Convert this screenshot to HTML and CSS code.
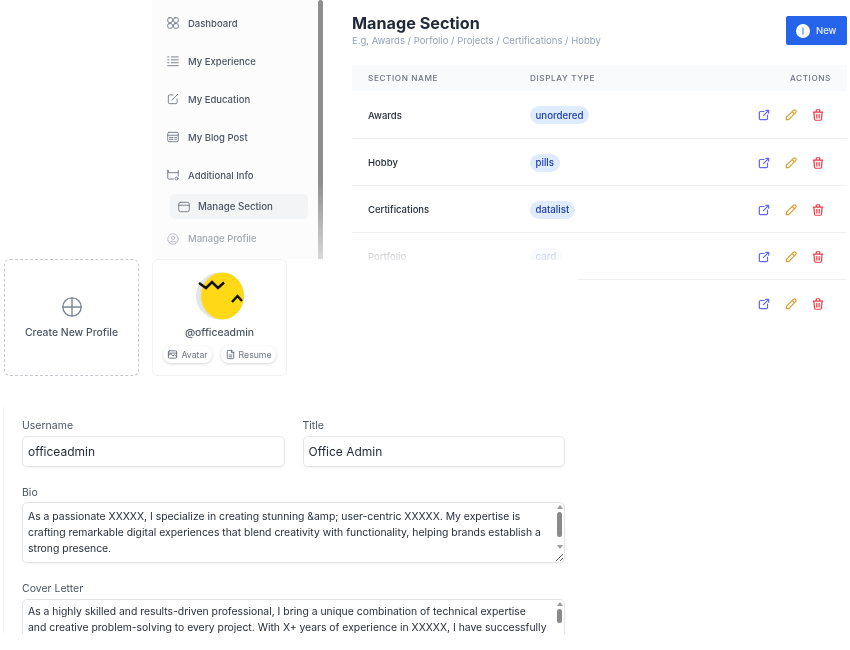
FILE: index.html
```html
<!DOCTYPE html>
<html>

<head>
	<meta charset="UTF-8">
	<title>Manage Section</title>
	<link rel="stylesheet" href="styles.css">
</head>

<body>
	<svg class="defs" width="0" height="0">
		<symbol id="i-open" viewBox="0 0 24 24"><path d="M12 6H6a2 2 0 0 0-2 2v10a2 2 0 0 0 2 2h10a2 2 0 0 0 2-2v-6M11 13l9-9M15 4h5v5"/></symbol>
		<symbol id="i-edit" viewBox="0 0 24 24"><path d="M4 20v-4L16 4a2.8 2.8 0 0 1 4 4L8 20zM14 6l4 4"/></symbol>
		<symbol id="i-trash" viewBox="0 0 24 24"><path d="M4 7h16M10 11v6M14 11v6M5 7l1 12a2 2 0 0 0 2 2h8a2 2 0 0 0 2-2l1-12M9 7V4a1 1 0 0 1 1-1h4a1 1 0 0 1 1 1v3"/></symbol>
	</svg>

	<div class="top">
		<div class="left">
			<nav class="sidebar">
				<a class="nav-item"><svg viewBox="0 0 24 24"><rect x="3" y="3" width="8" height="8" rx="2.5"/><rect x="13" y="3" width="8" height="8" rx="2.5"/><rect x="3" y="13" width="8" height="8" rx="2.5"/><rect x="13" y="13" width="8" height="8" rx="2.5"/></svg>Dashboard</a>
				<a class="nav-item"><svg viewBox="0 0 24 24"><path d="M9 5h12M9 10h12M9 15h12M3 20h18M3 5h2M3 10h2M3 15h2"/></svg>My Experience</a>
				<a class="nav-item"><svg viewBox="0 0 24 24"><path d="M12 5H6a2 2 0 0 0-2 2v11a2 2 0 0 0 2 2h11a2 2 0 0 0 2-2v-6M10 14l10-10"/></svg>My Education</a>
				<a class="nav-item"><svg viewBox="0 0 24 24"><rect x="3" y="4" width="18" height="16" rx="2"/><path d="M3 9h18M6 13h6M6 16h6M15 13h3M15 16h3"/></svg>My Blog Post</a>
				<a class="nav-item"><svg viewBox="0 0 24 24"><path d="M13 19H5a2 2 0 0 1-2-2V4M3 4h1v4h17V4M21 8v6"/><circle cx="18" cy="18" r="2.5"/></svg>Additional Info</a>
				<a class="nav-sub"><svg viewBox="0 0 24 24"><rect x="3" y="4" width="18" height="16" rx="3"/><path d="M3 9h18"/></svg>Manage Section</a>
				<a class="nav-item faded"><svg viewBox="0 0 24 24"><circle cx="12" cy="12" r="9"/><circle cx="12" cy="10" r="3"/><path d="M6 18c2-3 10-3 12 0"/></svg>Manage Profile</a>
				<div class="scroll-thumb"></div>
			</nav>

			<div class="cards">
				<div class="card card-new">
					<svg class="plus" viewBox="0 0 24 24"><circle cx="12" cy="12" r="10"/><path d="M12 2v20M2 12h20"/></svg>
					<span>Create New Profile</span>
				</div>
				<div class="card card-profile">
					<div class="avatar">
						<svg viewBox="0 0 50 48">
							<circle cx="23.5" cy="24" r="23.5" fill="#e2e4ea"/>
							<ellipse cx="26.5" cy="24" rx="21.5" ry="23.5" fill="#ffd916"/>
							<path class="mark" d="M3 11l7 5 6-6 6 6 6-5.5M36 30l5.5-6 4.5 5"/>
						</svg>
					</div>
					<div class="handle">@officeadmin</div>
					<div class="chips">
						<span class="chip"><svg viewBox="0 0 24 24"><rect x="3" y="4" width="18" height="16" rx="2"/><path d="M3 14l5-3 5 4 3-2 5 3M3 9h18"/></svg>Avatar</span>
						<span class="chip"><svg viewBox="0 0 24 24"><path d="M14 3H7a2 2 0 0 0-2 2v14a2 2 0 0 0 2 2h10a2 2 0 0 0 2-2V8zM14 3v5h5M9 13h6M9 17h6"/></svg>Resume</span>
					</div>
				</div>
			</div>
		</div>

		<main class="panel">
			<div class="panel-head">
				<div>
					<h1>Manage Section</h1>
					<p>E.g, Awards / Porfolio / Projects / Certifications / Hobby</p>
				</div>
				<button type="button" class="btn-new"><svg viewBox="0 0 24 24"><circle cx="12" cy="12" r="12" fill="#fff"/><path d="M12 7v10" stroke="#60a5fa" stroke-width="2.5"/></svg>New</button>
			</div>

			<div class="table-wrap">
				<table>
					<tr>
						<th class="col-name">Section Name</th>
						<th class="col-type">Display Type</th>
						<th class="col-act">Actions</th>
					</tr>
					<tr>
						<td>Awards</td>
						<td><span class="pill">unordered</span></td>
						<td class="acts"><svg class="ic blue"><use href="#i-open"/></svg><svg class="ic amber"><use href="#i-edit"/></svg><svg class="ic red"><use href="#i-trash"/></svg></td>
					</tr>
					<tr>
						<td>Hobby</td>
						<td><span class="pill">pills</span></td>
						<td class="acts"><svg class="ic blue"><use href="#i-open"/></svg><svg class="ic amber"><use href="#i-edit"/></svg><svg class="ic red"><use href="#i-trash"/></svg></td>
					</tr>
					<tr>
						<td>Certifications</td>
						<td><span class="pill">datalist</span></td>
						<td class="acts"><svg class="ic blue"><use href="#i-open"/></svg><svg class="ic amber"><use href="#i-edit"/></svg><svg class="ic red"><use href="#i-trash"/></svg></td>
					</tr>
					<tr>
						<td>Portfolio</td>
						<td><span class="pill">card</span></td>
						<td class="acts"><svg class="ic blue"><use href="#i-open"/></svg><svg class="ic amber"><use href="#i-edit"/></svg><svg class="ic red"><use href="#i-trash"/></svg></td>
					</tr>
					<tr class="last">
						<td></td>
						<td></td>
						<td class="acts"><svg class="ic blue"><use href="#i-open"/></svg><svg class="ic amber"><use href="#i-edit"/></svg><svg class="ic red"><use href="#i-trash"/></svg></td>
					</tr>
				</table>
				<div class="table-fade"></div>
			</div>
		</main>
	</div>

	<form class="form">
		<div class="form-row">
			<label class="field">Username<input type="text" value="officeadmin"></label>
			<label class="field">Title<input type="text" value="Office Admin"></label>
		</div>
		<label class="field">Bio
			<div class="ta-box bio-box">
				<textarea class="bio">As a passionate XXXXX, I specialize in creating stunning &amp;amp; user-centric XXXXX. My expertise is crafting remarkable digital experiences that blend creativity with functionality, helping brands establish a strong presence.</textarea>
				<div class="sbar"><i class="up"></i><b></b><i class="down"></i></div>
			</div>
		</label>
		<label class="field">Cover Letter
			<div class="ta-box cover-box">
				<textarea class="cover">As a highly skilled and results-driven professional, I bring a unique combination of technical expertise and creative problem-solving to every project. With X+ years of experience in XXXXX, I have successfully delivered solutions for a wide range of clients, and I am always looking for new challenges.</textarea>
				<div class="sbar"><i class="up"></i><b></b></div>
			</div>
		</label>
	</form>
</body>

</html>
```

FILE: styles.css
```css
* { box-sizing: border-box; }

html, body { height: 650px; overflow: hidden; }

body {
	margin: 0;
	background: #fff;
	color: #1f2937;
	font-family: Inter, "Liberation Sans", sans-serif;
	filter: blur(0.5px);
}

.defs { position: absolute; }

svg { fill: none; stroke: currentColor; stroke-width: 1.7; stroke-linecap: round; stroke-linejoin: round; flex: none; }

.top { display: flex; height: 405px; }

.left { width: 345px; }

/* sidebar */
.sidebar {
	position: relative;
	height: 259px;
	margin-left: 152px;
	width: 171px;
	padding: 4px 0 0 14px;
	overflow: hidden;
	background: #fcfcfd;
}

.nav-item, .nav-sub {
	display: flex;
	align-items: center;
	gap: 8px;
	font-size: 9.5px;
	font-weight: 500;
	color: #4b5563;
}

.nav-item { height: 38px; }
.nav-item svg, .nav-sub svg { width: 14px; height: 14px; color: #6b7280; stroke-width: 1.5; }

.nav-sub {
	height: 25px;
	width: 138px;
	margin: 0 0 0 4px;
	padding-left: 7px;
	gap: 7px;
	border-radius: 5px;
	background: #f3f4f6;
	font-size: 9.7px;
}

.nav-item.faded { height: 39px; opacity: 0.5; }

.scroll-thumb {
	position: absolute;
	top: 0;
	right: 0;
	width: 5px;
	height: 259px;
	border-radius: 3px 3px 0 0;
	background: linear-gradient(#8e8e8e 70%, #d8d8d8);
}

/* cards */
.cards { display: flex; gap: 13px; padding-left: 4px; }

.card {
	width: 135px;
	height: 117px;
	border-radius: 6px;
}

.card-new {
	display: flex;
	flex-direction: column;
	align-items: center;
	padding-top: 36px;
	gap: 8px;
	border: 1px dashed #c4c8ce;
	font-size: 10.4px;
	font-weight: 500;
	color: #4b5563;
}

.plus { width: 22px; height: 22px; color: #7b8594; stroke-width: 1.5; }

.card-profile {
	display: flex;
	flex-direction: column;
	align-items: center;
	padding-top: 12px;
	border: 1px solid #f1f2f4;
}

.avatar svg { display: block; width: 50px; height: 48px; margin-left: 2px; stroke: none; }
.avatar .mark { stroke: #15130f; stroke-width: 2.5; stroke-linecap: butt; stroke-linejoin: miter; }

.handle { margin-top: 6px; font-size: 10.4px; font-weight: 500; color: #4b5563; }

.chips { display: flex; gap: 9px; margin-top: 7px; }

.chip {
	display: flex;
	align-items: center;
	gap: 3px;
	height: 17px;
	padding: 0 4px;
	border-radius: 8px;
	font-size: 8.7px;
	color: #6b7280;
	box-shadow: 0 1px 3px rgba(0, 0, 0, 0.16);
}

.chip svg { width: 11px; height: 11px; color: #4b5563; }

/* table panel */
.panel { width: 495px; margin-left: 7px; }

.panel-head {
	display: flex;
	justify-content: space-between;
	height: 65px;
	padding-top: 14px;
}

h1 { margin: 0; font-size: 16.2px; line-height: 19px; font-weight: 700; color: #1f2937; }

.panel-head p { margin: 2px 0 0; font-size: 9.5px; line-height: 12px; color: #94a3b8; }

.btn-new {
	display: flex;
	align-items: center;
	gap: 6px;
	width: 61px;
	height: 29px;
	margin-top: 2px;
	padding: 0 0 0 10px;
	border: 0;
	border-radius: 2px;
	background: #2563eb;
	color: #e8efff;
	font: 500 9.5px Inter, sans-serif;
}

.btn-new svg { width: 14px; height: 14px; stroke: none; }

.table-wrap { position: relative; }

table { width: 100%; border-collapse: collapse; table-layout: fixed; }

th {
	height: 26px;
	padding: 0 16px;
	background: #f9fafb;
	font-size: 8.2px;
	font-weight: 500;
	letter-spacing: 0.6px;
	text-align: left;
	text-transform: uppercase;
	color: #6b7280;
}

.col-name { width: 162px; }
.col-type { width: 200px; padding-left: 16px; }
th.col-act { text-align: right; }

td {
	height: 47px;
	padding: 2px 16px 0;
	border-bottom: 1px solid #eef0f2;
	font-size: 9.5px;
	font-weight: 500;
	color: #1f2937;
}

.last td { border-bottom: 0; }

.pill {
	display: inline-block;
	padding: 2.5px 5.5px;
	border-radius: 9px;
	background: #dfebfe;
	font-size: 9.7px;
	line-height: 13px;
	color: #1e40af;
}

.acts { padding: 2px 22px 0 0; text-align: right; white-space: nowrap; font-size: 0; }

.ic { width: 14px; height: 14px; margin-left: 13px; vertical-align: middle; stroke-width: 2.1; }
.blue { color: #6366f1; }
.amber { color: #dd9f32; }
.red { color: #ec3f48; }

.table-fade {
	position: absolute;
	top: 168px;
	left: 0;
	width: 225px;
	height: 47px;
	background: linear-gradient(rgba(255, 255, 255, 0.55), rgba(255, 255, 255, 0.85) 27px, #fff 27px);
}

/* form */
.form {
	height: 229px;
	margin-left: 3px;
	padding: 14px 0 0 18px;
	overflow: hidden;
	border-left: 1px solid #f7f7f8;
}

.form-row { display: flex; gap: 18px; width: 543px; }
.form-row .field { width: 263px; margin-bottom: 19px; }

.field { display: block; font-size: 10.5px; line-height: 13px; color: #4b5563; }

input, textarea {
	display: block;
	border: 1px solid #e2e5ea;
	border-radius: 5px;
	color: #1f2937;
	font-family: Inter, "Liberation Sans", sans-serif;
	box-shadow: 0 1px 2px rgba(0, 0, 0, 0.05);
}

input { width: 100%; height: 31px; margin-top: 4px; padding: 0 5px; font-size: 12px; }

.ta-box { position: relative; width: 543px; }

textarea {
	width: 100%;
	font-size: 10.4px;
	line-height: 16px;
	overflow: hidden;
}

.bio-box { margin-top: 3px; margin-bottom: 19px; }
.cover-box { margin-top: 4px; }

.bio { height: 61px; padding: 6px 14px 6px 5px; }
.cover { height: 80px; padding: 4px 17px 4px 5px; }

/* drawn scrollbar over the textarea */
.sbar {
	position: absolute;
	top: 1px;
	right: 1px;
	display: flex;
	flex-direction: column;
	align-items: center;
	width: 9px;
	padding-top: 2px;
}

.sbar b {
	width: 5px;
	margin-top: 3px;
	border-radius: 3px;
	background: #8a8a8a;
}

.bio-box .sbar b { height: 25px; }
.cover-box .sbar b { height: 14px; }

.sbar i {
	width: 0;
	height: 0;
	border-left: 3px solid transparent;
	border-right: 3px solid transparent;
}

.sbar .up { border-bottom: 4px solid #9a9a9a; }
.sbar .down { margin-top: 8px; border-top: 4px solid #9a9a9a; }
```
